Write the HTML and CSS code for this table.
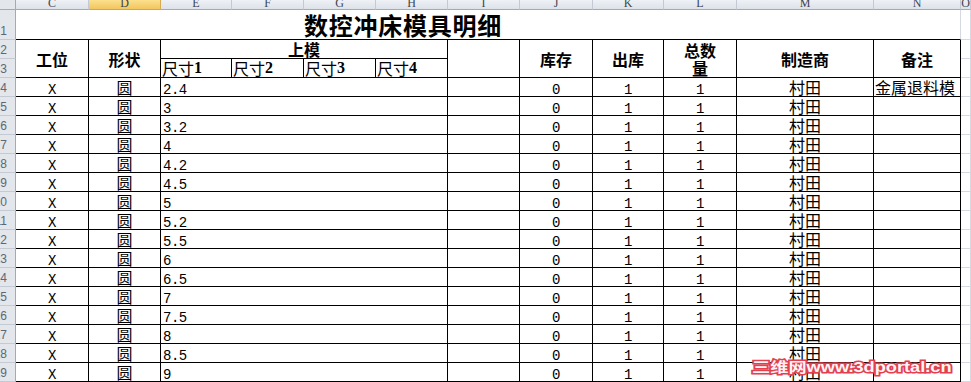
FILE: index.html
```html
<!DOCTYPE html>
<html lang="zh-CN">
<head>
<meta charset="utf-8">
<title>数控冲床模具明细</title>
<link rel="stylesheet" href="styles.css">
</head>
<body>
<div class="sheet">
  <!-- column headers -->
  <div class="corner"></div>
  <div class="colhead">C</div>
  <div class="colhead sel">D</div>
  <div class="colhead">E</div>
  <div class="colhead">F</div>
  <div class="colhead">G</div>
  <div class="colhead">H</div>
  <div class="colhead">I</div>
  <div class="colhead">J</div>
  <div class="colhead">K</div>
  <div class="colhead">L</div>
  <div class="colhead">M</div>
  <div class="colhead">N</div>
  <div class="colhead">O</div>

  <!-- row 1 -->
  <div class="rowhead"><span>1</span></div>
  <div class="title">数控冲床模具明细</div>
  <div class="grid-cell"></div>

  <!-- rows 2-3 -->
  <div class="rowhead"><span>2</span></div>
  <div class="h r2 c-c">工位</div>
  <div class="h r2 c-d">形状</div>
  <div class="h c-eh">上模</div>
  <div class="h r2 c-i"></div>
  <div class="h r2 c-j">库存</div>
  <div class="h r2 c-k">出库</div>
  <div class="h r2 c-l">总数<br>量</div>
  <div class="h r2 c-m">制造商</div>
  <div class="h r2 c-n">备注</div>
  <div class="grid-cell"></div>

  <div class="rowhead"><span>3</span></div>
  <div class="sub">尺寸<b>1</b></div>
  <div class="sub">尺寸<b>2</b></div>
  <div class="sub">尺寸<b>3</b></div>
  <div class="sub">尺寸<b>4</b></div>
  <div class="grid-cell"></div>

  <!-- data rows -->
  <div class="rowhead"><span>4</span></div>
  <div class="d ctr mono">X</div><div class="d ctr">圆</div><div class="d size mono">2.4</div><div class="d"></div><div class="d ctr mono">0</div><div class="d ctr mono">1</div><div class="d ctr mono">1</div><div class="d ctr">村田</div><div class="d note">金属退料模</div><div class="grid-cell"></div>

  <div class="rowhead"><span>5</span></div>
  <div class="d ctr mono">X</div><div class="d ctr">圆</div><div class="d size mono">3</div><div class="d"></div><div class="d ctr mono">0</div><div class="d ctr mono">1</div><div class="d ctr mono">1</div><div class="d ctr">村田</div><div class="d"></div><div class="grid-cell"></div>

  <div class="rowhead"><span>6</span></div>
  <div class="d ctr mono">X</div><div class="d ctr">圆</div><div class="d size mono">3.2</div><div class="d"></div><div class="d ctr mono">0</div><div class="d ctr mono">1</div><div class="d ctr mono">1</div><div class="d ctr">村田</div><div class="d"></div><div class="grid-cell"></div>

  <div class="rowhead"><span>7</span></div>
  <div class="d ctr mono">X</div><div class="d ctr">圆</div><div class="d size mono">4</div><div class="d"></div><div class="d ctr mono">0</div><div class="d ctr mono">1</div><div class="d ctr mono">1</div><div class="d ctr">村田</div><div class="d"></div><div class="grid-cell"></div>

  <div class="rowhead"><span>8</span></div>
  <div class="d ctr mono">X</div><div class="d ctr">圆</div><div class="d size mono">4.2</div><div class="d"></div><div class="d ctr mono">0</div><div class="d ctr mono">1</div><div class="d ctr mono">1</div><div class="d ctr">村田</div><div class="d"></div><div class="grid-cell"></div>

  <div class="rowhead"><span>9</span></div>
  <div class="d ctr mono">X</div><div class="d ctr">圆</div><div class="d size mono">4.5</div><div class="d"></div><div class="d ctr mono">0</div><div class="d ctr mono">1</div><div class="d ctr mono">1</div><div class="d ctr">村田</div><div class="d"></div><div class="grid-cell"></div>

  <div class="rowhead"><span>10</span></div>
  <div class="d ctr mono">X</div><div class="d ctr">圆</div><div class="d size mono">5</div><div class="d"></div><div class="d ctr mono">0</div><div class="d ctr mono">1</div><div class="d ctr mono">1</div><div class="d ctr">村田</div><div class="d"></div><div class="grid-cell"></div>

  <div class="rowhead"><span>11</span></div>
  <div class="d ctr mono">X</div><div class="d ctr">圆</div><div class="d size mono">5.2</div><div class="d"></div><div class="d ctr mono">0</div><div class="d ctr mono">1</div><div class="d ctr mono">1</div><div class="d ctr">村田</div><div class="d"></div><div class="grid-cell"></div>

  <div class="rowhead"><span>12</span></div>
  <div class="d ctr mono">X</div><div class="d ctr">圆</div><div class="d size mono">5.5</div><div class="d"></div><div class="d ctr mono">0</div><div class="d ctr mono">1</div><div class="d ctr mono">1</div><div class="d ctr">村田</div><div class="d"></div><div class="grid-cell"></div>

  <div class="rowhead"><span>13</span></div>
  <div class="d ctr mono">X</div><div class="d ctr">圆</div><div class="d size mono">6</div><div class="d"></div><div class="d ctr mono">0</div><div class="d ctr mono">1</div><div class="d ctr mono">1</div><div class="d ctr">村田</div><div class="d"></div><div class="grid-cell"></div>

  <div class="rowhead"><span>14</span></div>
  <div class="d ctr mono">X</div><div class="d ctr">圆</div><div class="d size mono">6.5</div><div class="d"></div><div class="d ctr mono">0</div><div class="d ctr mono">1</div><div class="d ctr mono">1</div><div class="d ctr">村田</div><div class="d"></div><div class="grid-cell"></div>

  <div class="rowhead"><span>15</span></div>
  <div class="d ctr mono">X</div><div class="d ctr">圆</div><div class="d size mono">7</div><div class="d"></div><div class="d ctr mono">0</div><div class="d ctr mono">1</div><div class="d ctr mono">1</div><div class="d ctr">村田</div><div class="d"></div><div class="grid-cell"></div>

  <div class="rowhead"><span>16</span></div>
  <div class="d ctr mono">X</div><div class="d ctr">圆</div><div class="d size mono">7.5</div><div class="d"></div><div class="d ctr mono">0</div><div class="d ctr mono">1</div><div class="d ctr mono">1</div><div class="d ctr">村田</div><div class="d"></div><div class="grid-cell"></div>

  <div class="rowhead"><span>17</span></div>
  <div class="d ctr mono">X</div><div class="d ctr">圆</div><div class="d size mono">8</div><div class="d"></div><div class="d ctr mono">0</div><div class="d ctr mono">1</div><div class="d ctr mono">1</div><div class="d ctr">村田</div><div class="d"></div><div class="grid-cell"></div>

  <div class="rowhead"><span>18</span></div>
  <div class="d ctr mono">X</div><div class="d ctr">圆</div><div class="d size mono">8.5</div><div class="d"></div><div class="d ctr mono">0</div><div class="d ctr mono">1</div><div class="d ctr mono">1</div><div class="d ctr">村田</div><div class="d"></div><div class="grid-cell"></div>

  <div class="rowhead"><span>19</span></div>
  <div class="d ctr mono">X</div><div class="d ctr">圆</div><div class="d size mono">9</div><div class="d"></div><div class="d ctr mono">0</div><div class="d ctr mono">1</div><div class="d ctr mono">1</div><div class="d ctr">村田</div><div class="d"></div><div class="grid-cell"></div>

  <div class="watermark">三维网www.3dportal.cn</div>
</div>
</body>
</html>
```

FILE: styles.css
```css
html, body {
  margin: 0;
  padding: 0;
  background: #ffffff;
}

.sheet {
  position: relative;
  width: 971px;
  height: 382px;
  overflow: hidden;
  display: grid;
  grid-template-columns: 16px 73px 72px 71px 72px 72px 72px 72px 73px 71px 73px 137px 87px 10px;
  grid-template-rows: 10px 30px 19px 19px repeat(16, 19px);
  font-family: "Noto Sans CJK SC", "Noto Sans", sans-serif;
  font-size: 16px;
  color: #000;
}

.sheet > div {
  box-sizing: border-box;
  min-width: 0;
  overflow: hidden;
}

/* column header strip */
.corner {
  background: #e3e7ec;
  border-right: 1px solid #9eabbc;
  border-bottom: 1px solid #9eabbc;
}

.colhead {
  background: linear-gradient(#eef1f5, #dde2e9);
  border-right: 1px solid #c3cad4;
  border-bottom: 1px solid #9eabbc;
  font-family: "Liberation Serif", serif;
  font-size: 12px;
  line-height: 12px;
  color: #3b4350;
  display: flex;
  justify-content: center;
  align-items: flex-end;
}

.colhead.sel {
  background: linear-gradient(#fbe08d, #f3c65e);
  border-right-color: #d8ab52;
}

/* row header */
.rowhead {
  background: #e3e7ec;
  border-right: 1px solid #9eabbc;
  border-bottom: 1px solid #c3cad4;
  font-family: "Liberation Sans", sans-serif;
  font-size: 12px;
  color: #5f6670;
  display: flex;
  justify-content: flex-end;
  align-items: flex-end;
  padding-right: 8px;
  padding-bottom: 1px;
  line-height: 13px;
  white-space: nowrap;
}

/* title row */
.title {
  grid-column: 2 / 14;
  border-bottom: 1px solid #000;
  border-right: 1px solid #d4d9e2;
  font-size: 24px;
  font-weight: 700;
  letter-spacing: 0.75px;
  line-height: 28px;
  padding-left: 288px;
  display: flex;
  align-items: flex-end;
}

.grid-cell {
  border-right: 1px solid #d4d9e2;
  border-bottom: 1px solid #d4d9e2;
}

/* table header */
.h {
  border-right: 1px solid #000;
  border-bottom: 1px solid #000;
  font-weight: 700;
  display: flex;
  align-items: center;
  justify-content: center;
  text-align: center;
  line-height: 18px;
  white-space: nowrap;
}

.r2 { grid-row: span 2; }
.c-eh { grid-column: span 4; }

.sub {
  border-right: 1px solid #000;
  border-bottom: 1px solid #000;
  display: flex;
  align-items: flex-end;
  padding-left: 1px;
  line-height: 18px;
  white-space: nowrap;
}

.sub b {
  font-family: "Liberation Serif", serif;
  font-weight: 700;
  font-size: 16px;
}

/* data rows */
.d {
  border-right: 1px solid #000;
  border-bottom: 1px solid #000;
  display: flex;
  align-items: flex-end;
  line-height: 18px;
  white-space: nowrap;
}

.d.ctr { justify-content: center; }

.d.size {
  grid-column: span 4;
  padding-left: 2px;
}

.mono {
  font-family: "Liberation Mono", monospace;
  font-size: 14px;
  letter-spacing: -0.5px;
}

.d.mono {
  line-height: 11px;
}

.d.note {
  padding-left: 1px;
}

/* watermark overlay */
.watermark {
  position: absolute;
  left: 752px;
  top: 358px;
  font-family: "Liberation Sans", "Noto Sans CJK SC", sans-serif;
  font-size: 14px;
  font-weight: 700;
  line-height: 18px;
  color: #fff4f5;
  -webkit-text-stroke: 3px #e2404f;
  paint-order: stroke fill;
  transform: scaleX(1.3);
  transform-origin: left center;
  white-space: nowrap;
  overflow: visible !important;
}
```
